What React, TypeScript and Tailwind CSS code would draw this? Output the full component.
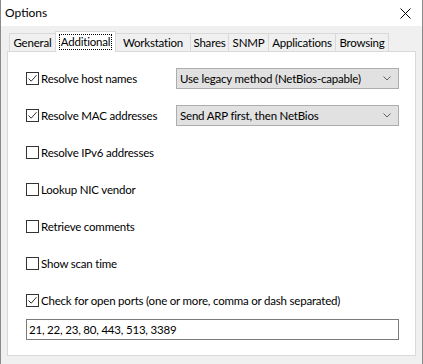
import { type ReactNode } from "react";

const tabs = [
  { label: "General", w: "w-[47px]" },
  { label: "Additional", w: "w-[61px]", active: true },
  { label: "Workstation", w: "w-[76px]" },
  { label: "Shares", w: "w-[39px]" },
  { label: "SNMP", w: "w-[41px]" },
  { label: "Applications", w: "w-[68px]" },
  { label: "Browsing", w: "w-[54px]" },
];

function Check({ checked }: { checked?: boolean }) {
  return (
    <span className="w-[13px] h-[13px] border border-[#333333] bg-white flex items-center justify-center shrink-0">
      {checked && (
        <svg width="11" height="11" viewBox="0 0 11 11">
          <path d="M1.5 5.5 L4.2 8.2 L9.5 2.2" fill="none" stroke="#333333" strokeWidth="1" />
        </svg>
      )}
    </span>
  );
}

function Row({ label, checked, children }: { label: string; checked?: boolean; children?: ReactNode }) {
  return (
    <div className="h-[37px] flex items-center">
      <div className="w-[150px] flex items-center gap-[2px] shrink-0 whitespace-nowrap">
        <Check checked={checked} />
        <span>{label}</span>
      </div>
      {children}
    </div>
  );
}

function Combo({ value }: { value: string }) {
  return (
    <div className="w-[223px] h-[21px] bg-[#e1e1e1] border border-[#adadad] flex items-center justify-between pl-[3px] pr-[7px] whitespace-nowrap">
      <span>{value}</span>
      <svg width="8" height="5" viewBox="0 0 8 5">
        <path d="M0.5 0.5 L4 4 L7.5 0.5" fill="none" stroke="#606060" strokeWidth="1" />
      </svg>
    </div>
  );
}

export default function App() {
  return (
    <div className="w-[423px] h-[364px] bg-[#f0f0f0] border-x border-[#8a8a8a] text-[11.5px] tracking-[-0.2px] text-black font-['Lato',sans-serif] leading-none overflow-hidden">
      {/* title bar */}
      <div className="h-[26px] bg-white flex items-center justify-between pl-[4px] pr-[11px]">
        <span className="text-[12px] tracking-normal">Options</span>
        <svg width="11" height="11" viewBox="0 0 11 11">
          <path d="M0.5 0.5 L10.5 10.5 M10.5 0.5 L0.5 10.5" stroke="#000" strokeWidth="1" />
        </svg>
      </div>

      <div className="pl-[6px] pr-[6px] pt-[5px]">
        {/* tabs */}
        <div className="flex items-end h-[20px] pl-[2px] relative z-10 whitespace-nowrap">
          {tabs.map((t) =>
            t.active ? (
              <div
                key={t.label}
                className={`${t.w} h-[21px] -mb-px -ml-px bg-white border border-b-0 border-[#d9d9d9] flex items-center justify-center`}
              >
                <span className="border border-dotted border-black px-px pb-[2px] pt-[1px]">{t.label}</span>
              </div>
            ) : (
              <div
                key={t.label}
                className={`${t.w} h-[18px] bg-[#f0f0f0] border border-b-0 border-[#d9d9d9] -ml-px first:ml-0 flex items-center justify-center`}
              >
                {t.label}
              </div>
            )
          )}
        </div>

        {/* panel */}
        <div className="h-[305px] bg-white border border-[#d9d9d9] pl-[18px] pt-[8px]">
          <Row label="Resolve host names" checked>
            <Combo value="Use legacy method (NetBios-capable)" />
          </Row>
          <Row label="Resolve MAC addresses" checked>
            <Combo value="Send ARP first, then NetBios" />
          </Row>
          <Row label="Resolve IPv6 addresses" />
          <Row label="Lookup NIC vendor" />
          <Row label="Retrieve comments" />
          <Row label="Show scan time" />
          <div className="h-[37px] flex items-center gap-[2px] whitespace-nowrap">
            <Check checked />
            <span>Check for open ports (one or more, comma or dash separated)</span>
          </div>
          <div className="w-[373px] h-[21px] border border-[#7a7a7a] flex items-center pl-[2px]">
            21, 22, 23, 80, 443, 513, 3389
          </div>
        </div>
      </div>
    </div>
  );
}
